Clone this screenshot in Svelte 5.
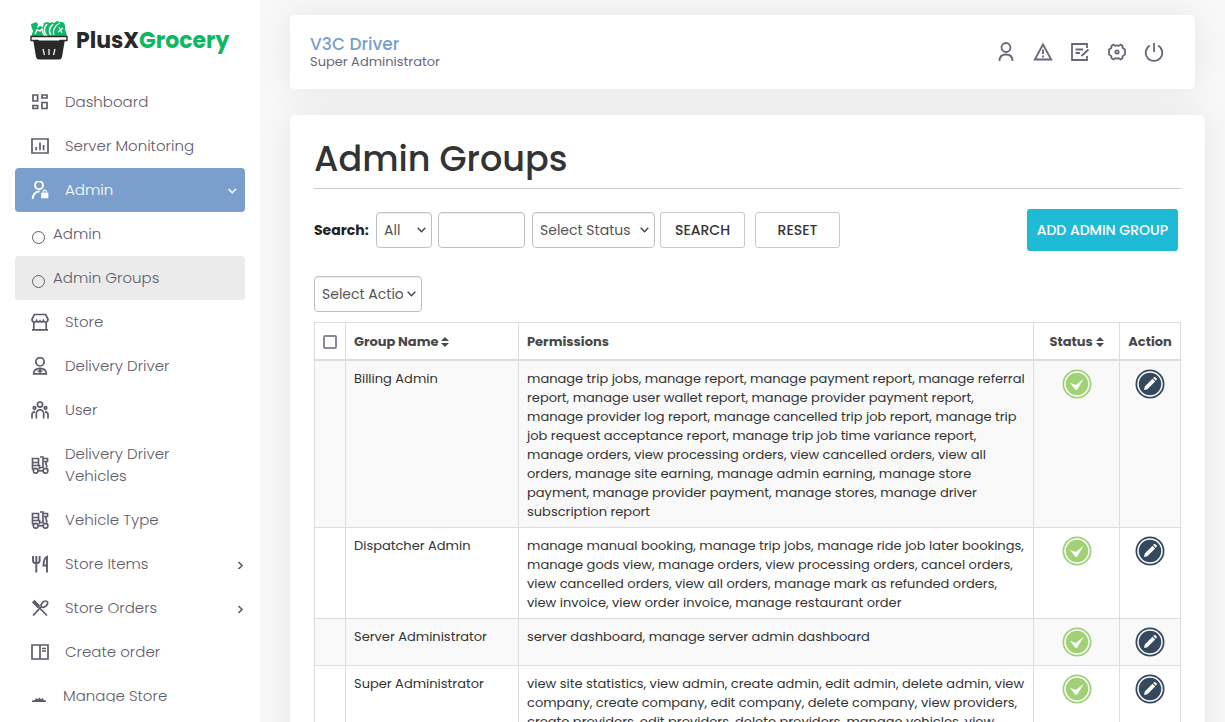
<script lang="ts">
	type NavItem = { label: string; icon: string; arrow?: boolean; active?: boolean; sub?: string[] };

	const nav: NavItem[] = [
		{ label: 'Dashboard', icon: 'dashboard' },
		{ label: 'Server Monitoring', icon: 'chart' },
		{ label: 'Admin', icon: 'admin', active: true, sub: ['Admin', 'Admin Groups'] },
		{ label: 'Store', icon: 'store' },
		{ label: 'Delivery Driver', icon: 'driver' },
		{ label: 'User', icon: 'users' },
		{ label: 'Delivery Driver Vehicles', icon: 'scooter' },
		{ label: 'Vehicle Type', icon: 'scooter' },
		{ label: 'Store Items', icon: 'cutlery', arrow: true },
		{ label: 'Store Orders', icon: 'crossed', arrow: true },
		{ label: 'Create order', icon: 'layout' }
	];

	const groups = [
		{
			name: 'Billing Admin',
			permissions:
				'manage trip jobs, manage report, manage payment report, manage referral report, manage user wallet report, manage provider payment report, manage provider log report, manage cancelled trip job report, manage trip job request acceptance report, manage trip job time variance report, manage orders, view processing orders, view cancelled orders, view all orders, manage site earning, manage admin earning, manage store payment, manage provider payment, manage stores, manage driver subscription report'
		},
		{
			name: 'Dispatcher Admin',
			permissions:
				'manage manual booking, manage trip jobs, manage ride job later bookings, manage gods view, manage orders, view processing orders, cancel orders, view cancelled orders, view all orders, manage mark as refunded orders, view invoice, view order invoice, manage restaurant order'
		},
		{
			name: 'Server Administrator',
			permissions: 'server dashboard, manage server admin dashboard'
		},
		{
			name: 'Super Administrator',
			permissions:
				'view site statistics, view admin, create admin, edit admin, delete admin, view company, create company, edit company, delete company, view providers, create providers, edit providers, delete providers, manage vehicles, view'
		}
	];

	let current = $state('Admin Groups');
	let keyword = $state('');
	let allChecked = $state(false);
</script>

{#snippet icon(name: string)}
	<svg class="icon" viewBox="0 0 18 18" fill="none" stroke="currentColor" stroke-width="1.7" aria-hidden="true">
		{#if name === 'dashboard'}
			<path d="M2 2h4.600v6H2zM11 2h5v3h-5zM2 12.500h4.600v3H2zM11 9.500h5v6h-5z" />
		{:else if name === 'chart'}
			<path d="M1 2h16v14H1zM5.200 10v3.200M9 5.500v7.700M12.600 8v5.200" />
		{:else if name === 'admin'}
			<circle cx="8" cy="4.300" r="4" stroke-width="1.900" />
			<path d="M1.700 18c0-4.500 2.600-7.600 7-7.600" stroke-width="1.900" />
			<path d="M11 12.500h5.500v4H11z" fill="currentColor" />
			<path d="M12.200 12v-1.200a1.600 1.600 0 0 1 3.200 0V12" stroke-width="1.200" />
		{:else if name === 'store'}
			<path d="M3.400 1.500h11.200L17 6.300c0 3.300-3.600 3.800-4.600 1.300-1 2-2.400 2-3.400.3-1 1.700-2.400 1.700-3.400-.3C4.600 10.100 1 9.600 1 6.300zM2.800 9v7.600M15.200 9v7.600M1 16.800h16" />
		{:else if name === 'driver'}
			<circle cx="9" cy="4.800" r="4.200" />
			<path d="M2.800 16.800c0-3.400 2-5.400 6.200-5.400s6.200 2 6.200 5.400zM9 11.400v5.400M6.500 14h5" />
		{:else if name === 'users'}
			<circle cx="9" cy="3.600" r="2.600" />
			<circle cx="3.500" cy="7" r="1.300" />
			<circle cx="14.500" cy="7" r="1.300" />
			<path d="M5.300 17.500v-5a3.700 3.700 0 0 1 7.400 0v5M1 17.500v-4c0-1.800 1-2.700 3-2.700M17 17.500v-4c0-1.800-1-2.700-3-2.700" />
		{:else if name === 'scooter'}
			<path d="M1.500 2.500h6v4h-6zM1.500 6v7h1M1.500 9.500h7v3.700M7.500 6v3.500M9 1h3v10.500H8M12 2.500h4.500v3H13M14.500 5.500l1.500 6" />
			<circle cx="4.700" cy="14.800" r="2.400" />
			<circle cx="14.500" cy="14.800" r="2.400" />
			<path d="M7 14.800h5" />
		{:else if name === 'cutlery'}
			<path d="M2 1v4.500c0 2 1 2.800 3.300 2.800s3.300-.8 3.300-2.800V1M5.300 1v16.500M16 17.500V1.800c-2.300 1-3.500 3.500-3.500 8.700H16" stroke-width="1.900" />
		{:else if name === 'crossed'}
			<path d="M8 10.200 2 16.500M7.500 8 16 16.500" />
			<path d="M2.200 2 8 8" stroke-width="3.600" />
			<path d="M8 10.200 10.300 8M10.300 8C9.200 5 12.200 2 14.500 2s2.600 1.600 1.800 3.400C15.500 7.200 12.800 9 10.300 8z" />
		{:else if name === 'layout'}
			<path d="M1 2h16v14H1zM9 2v14" />
			<path d="M11 5.500h4M11 8h4" stroke-width="1.500" />
		{/if}
	</svg>
{/snippet}

{#snippet sorter()}
	<svg class="sorter" viewBox="0 0 8 12" aria-hidden="true">
		<path d="M4 1 8 5H0zM4 11 0 7h8z" fill="currentColor" />
	</svg>
{/snippet}

<div class="app">
	<aside class="sidebar">
		<a class="logo" href="#home">
			<svg viewBox="0 0 38 39" aria-hidden="true">
				<path d="M1 16 3 10 1.500 6 1 3l3-1 2-1 2 2-1 4 3-2 3 1 1-4 3-1 3 1 2-1 2 1 3-2 3 1 3 0 2 3 0 4 2 7z" fill="#0cb863" />
				<path d="M5 13l2-4 3 1 2-2 1 4 2 3M17 15c-4-4-3-9 0-12M21 14c-3-4-1-8 2-11" fill="none" stroke="#fff" stroke-width="1.500" />
				<path d="M24 14c-2-4 1-10 6-12M28 11l5-4M29 6l3 6" fill="none" stroke="#fff" stroke-width="1.200" />
				<path d="M3 18h32l-3 18q-.5 2.500-3 2.500H9Q6.500 38.500 6 36z" fill="#292929" />
				<path d="M1 15.500h36v4h-7l-2 3H10l-2-3H1z" fill="#fff" stroke="#292929" stroke-width="1.400" stroke-linejoin="round" />
				<path d="M8 19.500h22l-2 3H10z" fill="#292929" />
				<path d="m13 28 1.500 6M19 28v6M25 28l-1.500 6" stroke="#fff" stroke-width="1.200" />
			</svg>
			<span>PlusX<b>Grocery</b></span>
		</a>
		<nav class="menu">
			{#each nav as item}
				<a class="menu-item" class:active={item.active} href="#{item.icon}">
					{@render icon(item.icon)}
					<span class="menu-label">{item.label}</span>
					{#if item.arrow || item.active}
						<svg class="arrow" viewBox="0 0 10 10" fill="none" stroke="currentColor" stroke-width="1.6" aria-hidden="true">
							<path d={item.active ? 'M1.500 4 5.200 7.700 9 4' : 'M3.500 3 7 6.500 3.500 10'} />
						</svg>
					{/if}
				</a>
				{#each item.sub ?? [] as sub}
					<a class="sub-item" class:current={sub === current} href="#{sub}" onclick={() => (current = sub)}>
						<span class="ring"></span>
						{sub}
					</a>
				{/each}
			{/each}
			<a class="menu-item last" href="#manage">
				<svg class="icon" viewBox="0 0 18 18" fill="currentColor" aria-hidden="true">
					<path d="M1 18v-4.500l3-.5 1-2 2 1.200 1.500-1.700 1.500 1.700 2-1.200.5 2 2.500.5V18z" />
				</svg>
				<span class="menu-label">Manage Store</span>
			</a>
		</nav>
	</aside>

	<main class="main">
		<header class="topbar">
			<div>
				<div class="user-name">V3C Driver</div>
				<div class="user-role">Super Administrator</div>
			</div>
			<div class="tools">
				<a href="#profile" aria-label="Profile">
					<svg viewBox="0 0 20 20"><circle cx="10" cy="5.500" r="4.500" /><path d="M3.500 19c0-4.500 2.500-6.500 6.500-6.500s6.500 2 6.500 6.500" /></svg>
				</a>
				<a href="#alerts" aria-label="Alerts">
					<svg viewBox="0 0 20 20"><path d="M10 2.500 18.200 17.500H1.800zM10 7.500v4.500M10 13.500v2" /></svg>
				</a>
				<a href="#notes" aria-label="Notes">
					<svg viewBox="0 0 20 20"><path d="M17 6V2H2v16h15v-4M5.500 7.500H13M5.500 11H10M11.500 14 18.500 7.500" /></svg>
				</a>
				<a href="#settings" aria-label="Settings">
					<svg viewBox="0 0 20 20"><path d="M6.500 2.500Q8 4.500 10 3.300q2 1.200 3.500-.8l2 1.200q-.6 2.600 2.500 3.800v5q-3.100 1.200-2.500 3.800l-2 1.200q-1.500-2-3.500-.8-2-1.200-3.500.8l-2-1.200Q5.100 13.700 2 12.500v-5q3.100-1.200 2.500-3.800z" stroke-linejoin="round" /><circle cx="10" cy="10" r="1.700" /></svg>
				</a>
				<a href="#logout" aria-label="Log out">
					<svg viewBox="0 0 20 20"><path d="M10 1v9M5.800 3.500a8.300 8.300 0 1 0 8.400 0" /></svg>
				</a>
			</div>
		</header>

		<section class="panel">
			<h1>Admin Groups</h1>
			<form class="search" onsubmit={(e) => e.preventDefault()}>
				<label class="search-label" for="field">Search:</label>
				<select id="field" class="field"><option>All</option></select>
				<input class="keyword" type="text" aria-label="Keyword" bind:value={keyword} />
				<select class="status-select" aria-label="Status"><option>Select Status</option></select>
				<div class="buttons">
					<button class="btn" type="submit">SEARCH</button>
					<button class="btn" type="button" onclick={() => (keyword = '')}>RESET</button>
				</div>
				<button class="btn add" type="button">ADD ADMIN GROUP</button>
			</form>
			<select class="bulk" aria-label="Bulk action"><option>Select Action</option></select>

			<table>
				<thead>
					<tr>
						<th class="col-check"><input type="checkbox" aria-label="Select all" bind:checked={allChecked} /></th>
						<th class="col-name">Group Name {@render sorter()}</th>
						<th>Permissions</th>
						<th class="col-status">Status {@render sorter()}</th>
						<th class="col-action">Action</th>
					</tr>
				</thead>
				<tbody>
					{#each groups as group}
						<tr>
							<td></td>
							<td>{group.name}</td>
							<td>{group.permissions}</td>
							<td class="center">
								<svg class="badge" viewBox="0 0 32 32" role="img" aria-label="Active">
									<circle cx="16" cy="16" r="14.500" fill="#a0d177" />
									<circle cx="16" cy="16" r="12" fill="none" stroke="#fff" stroke-width="1.500" />
									<path d="m9 14.700 5.800 2.300 7.900-6.300L16 22l-2-.5z" fill="#fff" />
								</svg>
							</td>
							<td class="center">
								<a class="edit" href="#edit" aria-label="Edit {group.name}">
									<svg class="badge" viewBox="0 0 32 32" aria-hidden="true">
										<circle cx="16" cy="16" r="14.500" fill="#34495e" />
										<circle cx="16" cy="16" r="12" fill="none" stroke="#fff" stroke-width="1.500" />
										<path d="m10 22 .8-3.500 7.700-7.700 2.600 2.600-7.700 7.800zM19.200 10l1-.9q.6-.4 1.100.1l1.400 1.400q.5.5.1 1l-1 1.100z" fill="#fff" />
									</svg>
								</a>
							</td>
						</tr>
					{/each}
				</tbody>
			</table>
		</section>
	</main>
</div>

<style>
	:global(body) {
		background: #f8f8f8;
		color: #333;
		font-family: Poppins, Inter, 'Liberation Sans', sans-serif;
		font-size: 13px;
	}

	.app {
		display: flex;
		height: 100vh;
		overflow: hidden;
	}

	.app,
	.app * {
		box-sizing: border-box;
	}

	a {
		color: inherit;
		text-decoration: none;
	}

	.sidebar {
		display: flex;
		flex-direction: column;
		flex: none;
		width: 260px;
		padding-bottom: 20px;
		background: #fff;
	}

	.logo {
		display: flex;
		flex: none;
		align-items: center;
		gap: 8px;
		height: 80px;
		padding-left: 30px;
		color: #292929;
		font-size: 22px;
		font-weight: 700;
	}

	.logo svg {
		width: 38px;
		height: 39px;
	}

	.logo b {
		color: #0cb863;
		font-weight: 700;
	}

	.menu {
		flex: 1;
		min-height: 0;
		padding: 0 15px;
		overflow: hidden;
		color: #5f5b6b;
		font-size: 15px;
		font-weight: 300;
		line-height: 22px;
	}

	.menu-item {
		display: flex;
		align-items: center;
		gap: 16px;
		padding: 11px 8px 11px 16px;
		border-radius: 4px;
	}

	.menu-item.active {
		background: #7a9fcd;
		color: #fff;
	}

	.menu-item:not(.active) .arrow {
		margin-right: -8px;
	}

	.menu-item.last {
		gap: 14px;
	}

	.menu-label {
		flex: 1;
		max-width: 150px;
	}

	.icon {
		flex: none;
		width: 18px;
		height: 18px;
	}

	.arrow {
		width: 10px;
		height: 10px;
		margin-left: auto;
	}

	.sub-item {
		display: flex;
		align-items: center;
		gap: 8px;
		padding: 11px 17px;
		border-radius: 4px;
	}

	.sub-item.current {
		background: #ebebeb;
	}

	.ring {
		width: 13px;
		height: 13px;
		margin-top: 7px;
		border: 1px solid #5f5b6b;
		border-radius: 50%;
	}

	.main {
		display: flex;
		flex: 1;
		flex-direction: column;
		gap: 26px;
		min-width: 0;
		padding: 15px 20px 0 30px;
		overflow: hidden;
	}

	.topbar {
		display: flex;
		flex: none;
		align-items: center;
		justify-content: space-between;
		height: 74px;
		margin-right: 10px;
		padding: 0 31px 0 20px;
		border-radius: 5px;
		background: #fff;
		box-shadow: 0 0 35px rgba(0, 0, 0, 0.08);
	}

	.user-name {
		color: #769fcd;
		font-size: 17px;
		font-weight: 500;
		line-height: 19px;
	}

	.user-role {
		color: #6a667a;
		font-size: 13px;
		line-height: 16px;
	}

	.tools {
		display: flex;
		gap: 17px;
	}

	.tools svg {
		display: block;
		width: 20px;
		height: 20px;
		fill: none;
		stroke: #6a667a;
		stroke-width: 1.8;
	}

	.panel {
		flex: none;
		padding: 24px;
		border-radius: 5px;
		background: #fff;
		box-shadow: 0 0 35px rgba(0, 0, 0, 0.08);
	}

	h1 {
		margin: 0 0 20px;
		padding-bottom: 9px;
		border-bottom: 1px solid #c9c9c9;
		color: #333;
		font-size: 35px;
		font-weight: 500;
		line-height: 40px;
	}

	.search {
		display: flex;
		align-items: center;
		margin-bottom: 25px;
		padding-right: 3px;
	}

	.search-label {
		width: 62px;
		color: #222;
		font-size: 14px;
		font-weight: 700;
	}

	select,
	.keyword {
		height: 36px;
		padding: 0 7px;
		border: 1px solid #bfc1c1;
		border-radius: 4px;
		background: #fff;
		box-shadow: inset 0 1px 1px rgba(0, 0, 0, 0.07);
		color: #555;
		font-family: inherit;
		font-size: 14px;
	}

	select {
		padding-right: 18px;
		background: #fff
			url("data:image/svg+xml,%3Csvg xmlns='http://www.w3.org/2000/svg' viewBox='0 0 9 6'%3E%3Cpath d='M.7.8l3.800 4 3.800-4' fill='none' stroke='%23444' stroke-width='1.4'/%3E%3C/svg%3E")
			no-repeat right 5px center / 9px 6px;
		appearance: none;
	}

	.field {
		width: 56px;
	}

	.keyword {
		width: 87px;
		margin: 0 7px 0 6px;
	}

	.status-select {
		width: 123px;
	}

	.bulk {
		display: block;
		width: 108px;
		margin-bottom: 10px;
	}

	.buttons {
		display: flex;
		gap: 10px;
		margin-left: 5px;
	}

	.btn {
		width: 85px;
		height: 36px;
		padding: 0;
		border: 1px solid #c8c8c8;
		border-radius: 3px;
		background: #fff;
		color: #333;
		font-family: inherit;
		font-size: 14px;
		font-weight: 500;
		cursor: pointer;
	}

	.btn.add {
		width: auto;
		height: 42px;
		margin-left: auto;
		padding: 0 10px;
		border: none;
		background: #1fbad6;
		color: #fff;
	}

	table {
		width: 100%;
		border-collapse: collapse;
		table-layout: fixed;
		line-height: 19px;
	}

	th,
	td {
		padding: 8px 8px 6px;
		border: 1px solid #ddd;
		text-align: left;
		vertical-align: top;
	}

	th {
		height: 37px;
		border-bottom-width: 2px;
		color: #484848;
		font-weight: 700;
		vertical-align: middle;
		white-space: nowrap;
	}

	tbody tr:nth-child(odd) {
		background: #f9f9f9;
	}

	.col-check {
		width: 31px;
	}

	.col-name {
		width: 173px;
	}

	.col-status {
		width: 86px;
		text-align: center;
	}

	.col-action {
		width: 61px;
		padding-right: 0;
		padding-left: 0;
		text-align: center;
	}

	.center {
		padding: 7px 8px;
		text-align: center;
	}

	.sorter {
		width: 8px;
		height: 12px;
		vertical-align: -2px;
	}

	.badge {
		display: block;
		width: 32px;
		height: 32px;
		margin: 0 auto;
	}

	input[type='checkbox'] {
		display: block;
		width: 14px;
		height: 14px;
		margin: 0;
		border: 2px solid #8a879b;
		border-radius: 2px;
		background: #fff;
		appearance: none;
	}

	input[type='checkbox']:checked {
		background: #7a9fcd;
	}
</style>
